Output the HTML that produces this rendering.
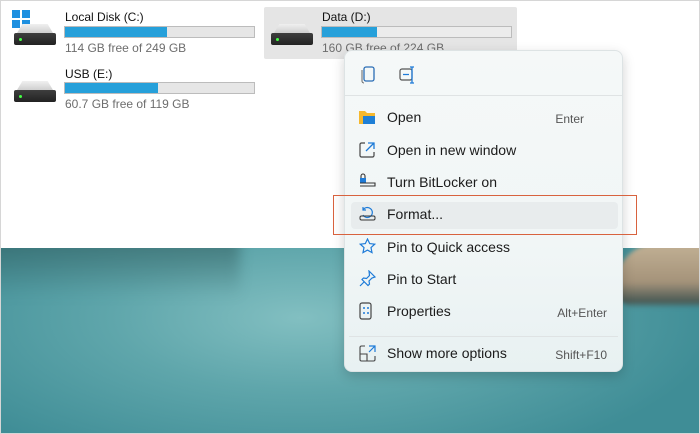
<!DOCTYPE html>
<html><head><style>
body{margin:0;width:700px;height:434px;overflow:hidden;font-family:"Liberation Sans",sans-serif;position:relative;background:#fff}
.frame{position:absolute;inset:0;border:1px solid #d6d6d6;box-sizing:border-box;z-index:20;pointer-events:none}
.lake{position:absolute;left:0;top:248px;width:700px;height:186px;background:radial-gradient(ellipse 420px 160px at 300px 70px,#82bfc1 0%,#5fa6ab 45%,#3f8d96 100%);overflow:hidden}
.reed{position:absolute;left:615px;top:-5px;width:100px;height:65px;background:linear-gradient(180deg,#c2b195,#a5937a 60%,#4b5a55 90%,rgba(60,100,100,0));border-radius:60px 0 0 30px;filter:blur(2px)}
.dark{position:absolute;left:-20px;top:-10px;width:260px;height:60px;background:linear-gradient(180deg,rgba(40,75,75,.5),rgba(60,110,110,0));filter:blur(6px)}
.t{position:absolute;font-size:12px;color:#111}
.g{position:absolute;font-size:12px;color:#6d6d6d}
.bar{position:absolute;height:10px;background:#e6e6e6;border:1px solid #bcbcbc}
.bar i{display:block;height:100%;background:#26a0da}
.disk{position:absolute;width:42px;height:12px;background:linear-gradient(#3e3e3e,#222);border-radius:2px}
.disk:before{content:"";position:absolute;left:3px;top:-9px;width:36px;height:9px;background:linear-gradient(#f0f0f0,#cfcfcf);clip-path:polygon(15% 0,85% 0,100% 100%,0 100%)}
.disk:after{content:"";position:absolute;left:5px;top:5px;width:3px;height:3px;background:#4f4;border-radius:50%}
.menu{position:absolute;left:344px;top:50px;width:279px;height:322px;background:linear-gradient(#f5f8f8,#f1f6f6 60%,#e8f1f2);border:1px solid #dde3e4;border-radius:8px;box-shadow:0 4px 12px rgba(0,0,0,.18);box-sizing:border-box}
.it{position:absolute;left:42px;font-size:14px;color:#1b1b1b}
.sc{position:absolute;right:15px;font-size:12px;color:#555}
.ic{position:absolute;left:14px}
</style></head><body>
<div class="lake"><div class="dark"></div><div class="reed"></div></div>
<div style="position:absolute;left:12px;top:10px;width:8px;height:8px;background:#1e90e0;box-shadow:10px 0 #1e90e0,0 10px #1e90e0,10px 10px #1e90e0"></div>
<div class="disk" style="left:14px;top:33px"></div>
<div class="t" style="left:65px;top:10px">Local Disk (C:)</div>
<div class="bar" style="left:64px;top:26px;width:189px"><i style="width:54%"></i></div>
<div class="g" style="left:65px;top:41px">114 GB free of 249 GB</div>
<div class="disk" style="left:14px;top:90px"></div>
<div class="t" style="left:65px;top:67px">USB (E:)</div>
<div class="bar" style="left:64px;top:82px;width:189px"><i style="width:49%"></i></div>
<div class="g" style="left:65px;top:97px">60.7 GB free of 119 GB</div>
<div style="position:absolute;left:264px;top:7px;width:253px;height:52px;background:#e5e5e5;border-radius:2px"></div>
<div class="disk" style="left:271px;top:33px"></div>
<div class="t" style="left:322px;top:10px">Data (D:)</div>
<div class="bar" style="left:321px;top:26px;width:189px;background:#ececec"><i style="width:29%"></i></div>
<div class="g" style="left:322px;top:41px">160 GB free of 224 GB</div>
<div class="menu">
<svg class="ic" style="left:16px;top:15px" width="16" height="18"><rect x="3" y="1" width="10" height="14" rx="2" fill="none" stroke="#2a6db5" stroke-width="1.3"/><path d="M1 4v11a2 2 0 0 0 2 2" fill="none" stroke="#666"/></svg>
<svg class="ic" style="left:54px;top:15px" width="18" height="18"><rect x="1" y="3" width="12" height="11" rx="2" fill="none" stroke="#555" stroke-width="1.2"/><path d="M4 8.5h6M13 1v16M11 1h4M11 17h4" stroke="#1e7bd8" stroke-width="1.3"/></svg>
<div style="position:absolute;left:0;right:0;top:44px;border-top:1px solid #dfe3e4"></div>
<svg class="ic" style="top:59px" width="16" height="14"><path d="M0 1h6l2 2h8v11H0z" fill="#f5b82e"/><rect x="4" y="6" width="12" height="8" fill="#1f7fd6"/></svg>
<div class="it" style="top:58px">Open</div><div class="sc" style="top:61px;right:38px">Enter</div>
<svg class="ic" style="top:91px" width="16" height="16"><path d="M6 1H2.5A1.5 1.5 0 0 0 1 2.5v11A1.5 1.5 0 0 0 2.5 15h11a1.5 1.5 0 0 0 1.5-1.5V10" fill="none" stroke="#444" stroke-width="1.2"/><path d="M9 1h6v6M15 1L7 9" fill="none" stroke="#1e7bd8" stroke-width="1.3"/></svg>
<div class="it" style="top:91px">Open in new window</div>
<svg class="ic" style="top:122px" width="18" height="14"><rect x="1" y="5" width="6" height="5" fill="#1e7bd8"/><path d="M2 5V3a2 2 0 0 1 4 0v2M1 10h15v3H1" fill="none" stroke="#333" stroke-width="1.1"/></svg>
<div class="it" style="top:123px">Turn BitLocker on</div>
<div style="position:absolute;left:6px;top:151px;width:267px;height:27px;background:#e8eced;border-radius:4px"></div>
<svg class="ic" style="top:155px" width="18" height="16"><path d="M4 4a5 5 0 1 1 0 5M4 1v3h3" fill="none" stroke="#1e7bd8" stroke-width="1.2"/><rect x="1" y="10" width="15" height="4" rx="1.5" fill="none" stroke="#333"/></svg>
<div class="it" style="top:155px">Format...</div>
<svg class="ic" style="top:187px" width="17" height="16"><path d="M8.5 1l2.2 4.6 5 .6-3.7 3.4 1 5-4.5-2.5-4.5 2.5 1-5L1.3 6.2l5-.6z" fill="none" stroke="#1e7bd8" stroke-width="1.2"/></svg>
<div class="it" style="top:188px">Pin to Quick access</div>
<svg class="ic" style="top:219px" width="17" height="17"><path d="M10 1l6 6-3 1-3 3 .5 3-1.5 1.5L3 9.5 4.5 8l3 .5 3-3z M5 12l-4 4" fill="none" stroke="#1e7bd8" stroke-width="1.2"/></svg>
<div class="it" style="top:220px">Pin to Start</div>
<svg class="ic" style="top:251px" width="14" height="18"><rect x="1" y="1" width="11" height="16" rx="2" fill="none" stroke="#444" stroke-width="1.2"/><path d="M4 6h2M8 6h2M4 11h2M8 11h2" stroke="#1e7bd8" stroke-width="1.5"/></svg>
<div class="it" style="top:252px">Properties</div><div class="sc" style="top:255px">Alt+Enter</div>
<div style="position:absolute;left:4px;right:4px;top:285px;border-top:1px solid #dfe3e4"></div>
<svg class="ic" style="top:294px" width="17" height="17"><path d="M6 1H2.5A1.5 1.5 0 0 0 1 2.5v12A1.5 1.5 0 0 0 2.5 16h12A1.5 1.5 0 0 0 16 14.5V11M1 9h7v7" fill="none" stroke="#444" stroke-width="1.1"/><path d="M10 1h6v6M16 1l-6 6" fill="none" stroke="#1e7bd8" stroke-width="1.2"/></svg>
<div class="it" style="top:294px">Show more options</div><div class="sc" style="top:297px">Shift+F10</div>
</div>
<div style="position:absolute;left:333px;top:195px;width:304px;height:40px;border:1.5px solid #d8623e;box-sizing:border-box"></div>
<div class="frame"></div>
</body></html>
